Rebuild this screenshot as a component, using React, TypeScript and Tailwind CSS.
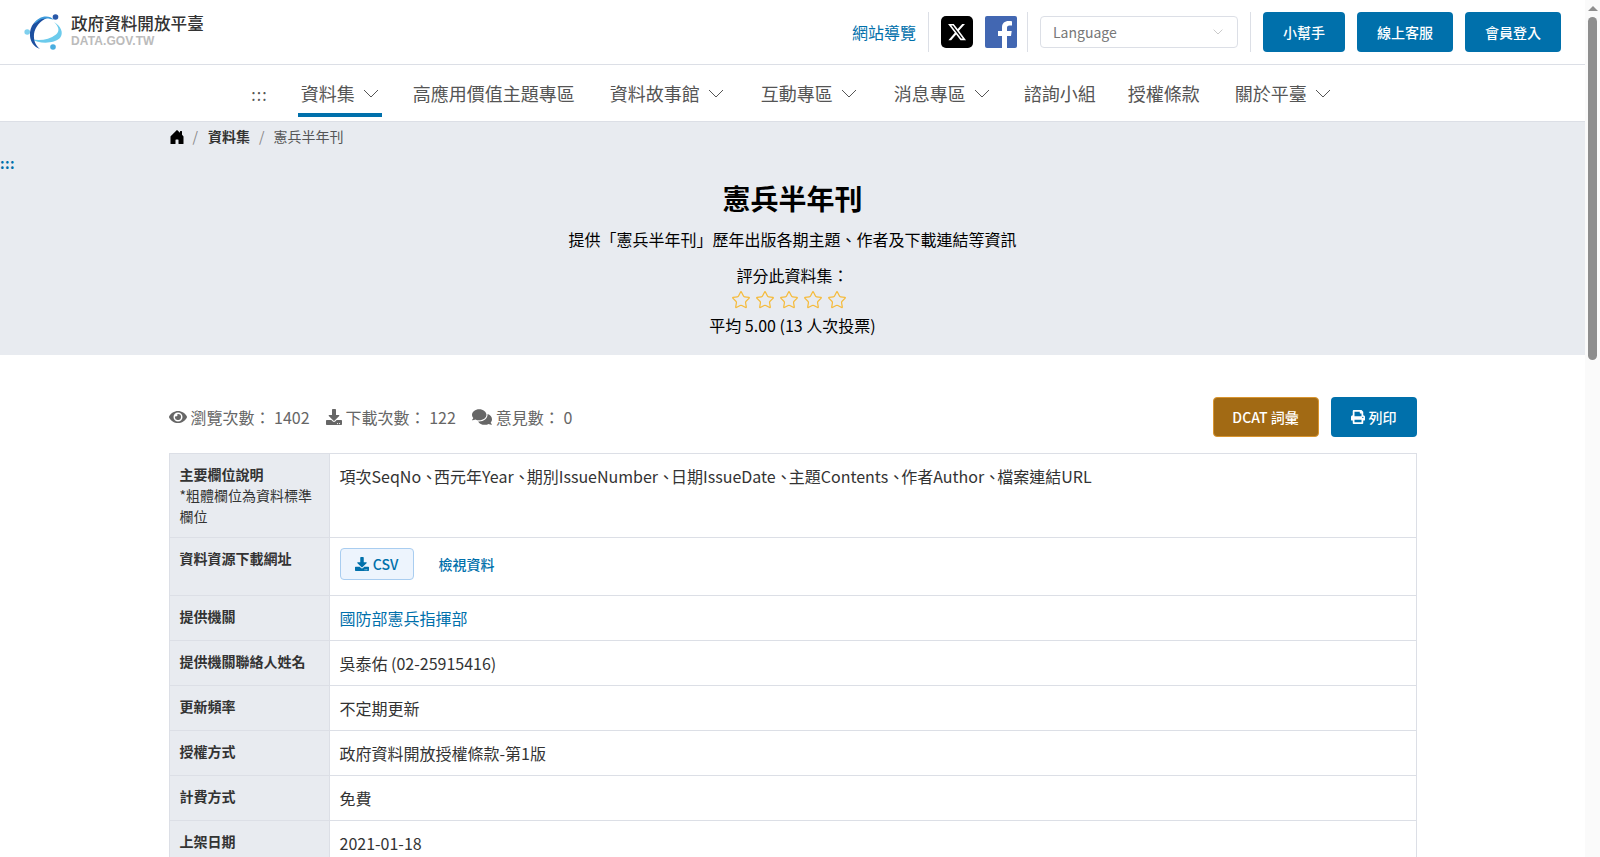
import { ReactNode } from "react";
import { Star } from "lucide-react";
import { BsHouseDoorFill } from "react-icons/bs";
import { FaComments, FaDownload, FaEye, FaPrint } from "react-icons/fa";
import { FaXTwitter } from "react-icons/fa6";

const navItems = [
  { label: "資料集", caret: true, active: true, nudge: "" },
  { label: "高應用價值主題專區", nudge: "-ml-px" },
  { label: "資料故事館", caret: true, nudge: "" },
  { label: "互動專區", caret: true, nudge: "ml-[2px]" },
  { label: "消息專區", caret: true, nudge: "ml-[2px]" },
  { label: "諮詢小組", nudge: "-ml-px" },
  { label: "授權條款", nudge: "-ml-[3px]" },
  { label: "關於平臺", caret: true, nudge: "" },
];

const fields = ["項次SeqNo", "西元年Year", "期別IssueNumber", "日期IssueDate", "主題Contents", "作者Author", "檔案連結URL"];

function Logo() {
  return (
    <svg width="40" height="37" viewBox="0 0 40 37" fill="none">
      <path d="M7 25C15 30 30 30 36 24C40 19 37 12 30 8C35 13 36 17 32 20.5C25 26 15 27 7 25z" fill="#6ccbec" />
      <path d="M23 4C14 2 5 11 6 22C6.5 28 10 33 16 35C11 31 9.5 26 10 20C11 13 16 7 23 4z" fill="#1c4fa0" />
      <path d="M10 10C14 2 25 0 30 6C24 3.5 17 4 13 8z" fill="#3d9bdc" />
      <circle cx="31.5" cy="3" r="2.8" fill="#2a58a8" />
      <circle cx="3.2" cy="18" r="2.8" fill="#7fd0ee" />
      <circle cx="29" cy="33" r="2.8" fill="#4aaee0" />
    </svg>
  );
}

function Caret({ width = 16 }: { width?: number }) {
  return (
    <svg width={width} height={(width * 9) / 16} viewBox="0 0 16 9" fill="none" stroke="currentColor" strokeWidth="1">
      <path d="M1 1l7 7 7-7" />
    </svg>
  );
}

function Row({ label, note, children }: { label: string; note?: ReactNode; children: ReactNode }) {
  return (
    <tr>
      <th className="w-[160px] border border-[#dcdfe6] bg-[#e8ebf0] p-2.5 text-left align-top text-sm leading-[21px] font-normal text-[#333]">
        <span className="font-bold">{label}</span>
        {note && <div>{note}</div>}
      </th>
      <td className="border border-[#dcdfe6] p-2.5 align-top text-base text-[#333]">{children}</td>
    </tr>
  );
}

export default function App() {
  return (
    <div className="flex h-[857px] overflow-hidden bg-white font-['Noto_Sans_CJK_TC','Noto_Sans',sans-serif] text-[#333]">
      <div className="min-w-0 flex-1">
        <header className="flex h-[65px] items-center border-b border-[#dcdfe6] pl-6 pr-6">
          <Logo />
          <div className="ml-[7px] -mt-[4px]">
            <div className="mb-[2px] text-[16.6px] leading-[20px] font-medium text-[#333]">政府資料開放平臺</div>
            <div className="font-['Liberation_Sans',sans-serif] text-[12px] leading-[13px] font-bold tracking-[0.1px] text-[#bbbbbb]">
              DATA.GOV.TW
            </div>
          </div>
          <div className="ml-auto flex items-center">
            <a className="text-base text-[#0070ab]">網站導覽</a>
            <div className="mx-3 h-10 w-px bg-[#dcdfe6]" />
            <div className="flex h-8 w-8 items-center justify-center rounded-[5px] bg-black text-white">
              <FaXTwitter size={20} />
            </div>
            <svg width="32" height="32" viewBox="0 0 32 32" className="ml-[12px]">
              <rect width="32" height="32" rx="2" fill="#4267b2" />
              <path d="M22 32V20h4l.7-5H22v-3c0-1.5.5-2.5 2.6-2.5H27V5.2C26.5 5.1 25 5 23.4 5 20 5 17 7.2 17 11.3V15h-4v5h4v12z" fill="#fff" />
            </svg>
            <div className="mr-3 ml-[10px] h-10 w-px bg-[#dcdfe6]" />
            <div className="flex h-8 w-[198px] items-center justify-between rounded border border-[#dcdfe6] pl-3 pr-[14px] text-sm text-[#777]">
              Language
              <span className="text-[#aaa]">
                <Caret width={10} />
              </span>
            </div>
            <div className="mx-3 h-10 w-px bg-[#dcdfe6]" />
            <div className="flex gap-3 text-sm font-medium text-white">
              <button className="h-10 w-[82px] rounded bg-[#0070ab]">小幫手</button>
              <button className="h-10 w-[96px] rounded bg-[#0070ab]">線上客服</button>
              <button className="h-10 w-[96px] rounded bg-[#0070ab]">會員登入</button>
            </div>
          </div>
        </header>

        <nav className="flex h-[57px] items-start justify-center gap-[29px] border-b border-[#dcdfe6] text-lg text-[#555]">
          <span className="mt-[16px] mr-[1px] text-base leading-[27px] tracking-[1px]">:::</span>
          {navItems.map((item) => (
            <a
              key={item.label}
              className={`flex h-[52px] items-center gap-2 border-b-4 px-[3px] pt-[8px] ${item.nudge} ${
                item.active ? "border-[#0070ab]" : "border-transparent"
              }`}
            >
              {item.label}
              {item.caret && <Caret />}
            </a>
          ))}
        </nav>

        <section className="relative h-[233px] bg-[#e8ebf0]">
          <span className="absolute top-[31px] left-0 text-sm leading-[21px] font-bold tracking-[0.5px] text-[#0070ab]">:::</span>
          <div className="mx-auto flex w-[1248px] items-center pt-[4px] text-sm leading-[21px]">
            <BsHouseDoorFill size={16} className="text-black" />
            <span className="mr-[10px] ml-[8px] text-[#888]">/</span>
            <span className="font-bold text-[#333]">資料集</span>
            <span className="mx-[9px] text-[#888]">/</span>
            <span className="text-[#555]">憲兵半年刊</span>
          </div>
          <div className="flex flex-col items-center text-center text-black">
            <h1 className="mt-[30px] text-[28px] leading-[42px] font-bold">憲兵半年刊</h1>
            <p className="mt-[8px] text-base">提供「憲兵半年刊」歷年出版各期主題、作者及下載連結等資訊</p>
            <p className="mt-[12px] text-base">評分此資料集：</p>
            <div className="mt-[3px] mr-2 flex gap-1">
              {[1, 2, 3, 4, 5].map((n) => (
                <Star key={n} size={20} strokeWidth={1.5} className="text-[#f5bb3c]" />
              ))}
            </div>
            <p className="mt-[3px] text-base">平均 5.00 (13 人次投票)</p>
          </div>
        </section>

        <main className="mx-auto w-[1248px]">
          <div className="mt-[42px] flex h-10 items-center justify-between">
            <div className="flex items-center text-base text-[#666]">
              <FaEye size={18} />
              <span className="ml-[4px]">瀏覽次數： 1402</span>
              <FaDownload size={16} className="ml-[16px]" />
              <span className="ml-[4px]">下載次數： 122</span>
              <FaComments size={20} className="ml-[16px]" />
              <span className="ml-[4px]">意見數： 0</span>
            </div>
            <div className="flex gap-3 text-sm font-medium text-white">
              <button className="h-10 w-[106px] rounded border border-[#d9952f] bg-[#a26a14]">DCAT 詞彙</button>
              <button className="flex h-10 w-[86px] items-center justify-center gap-1 rounded bg-[#0070ab]">
                <FaPrint size={14} />
                列印
              </button>
            </div>
          </div>

          <table className="mt-4 w-full border-collapse">
            <tbody>
              <Row label="主要欄位說明" note="*粗體欄位為資料標準欄位">
                {fields.map((f, i) => (
                  <span key={f}>
                    {f}
                    {i < fields.length - 1 && <span className="tracking-[-3px]">、</span>}
                  </span>
                ))}
              </Row>
              <Row label="資料資源下載網址">
                <div className="mb-[5px] flex items-center">
                  <a className="flex h-8 w-[74px] items-center justify-center gap-1 rounded border border-[#a9cdf0] bg-[#edf4fd] text-sm font-medium text-[#0070ab]">
                    <FaDownload size={14} />
                    CSV
                  </a>
                  <a className="ml-[25px] text-sm font-medium text-[#0070ab]">檢視資料</a>
                </div>
              </Row>
              <Row label="提供機關">
                <a className="text-[#0070ab]">國防部憲兵指揮部</a>
              </Row>
              <Row label="提供機關聯絡人姓名">吳泰佑 (02-25915416)</Row>
              <Row label="更新頻率">不定期更新</Row>
              <Row label="授權方式">政府資料開放授權條款-第1版</Row>
              <Row label="計費方式">免費</Row>
              <Row label="上架日期">2021-01-18</Row>
            </tbody>
          </table>
        </main>
      </div>

      {/* page scrollbar, the headless window does not draw one */}
      <aside className="flex w-[15px] shrink-0 flex-col items-center bg-[#fafafa]">
        <div className="mt-[6px] h-0 w-0 border-x-[5px] border-b-[5px] border-x-transparent border-b-[#8e8e8e]" />
        <div className="mt-[6px] h-[343px] w-[9px] rounded-full bg-[#8e8e8e]" />
      </aside>
    </div>
  );
}
